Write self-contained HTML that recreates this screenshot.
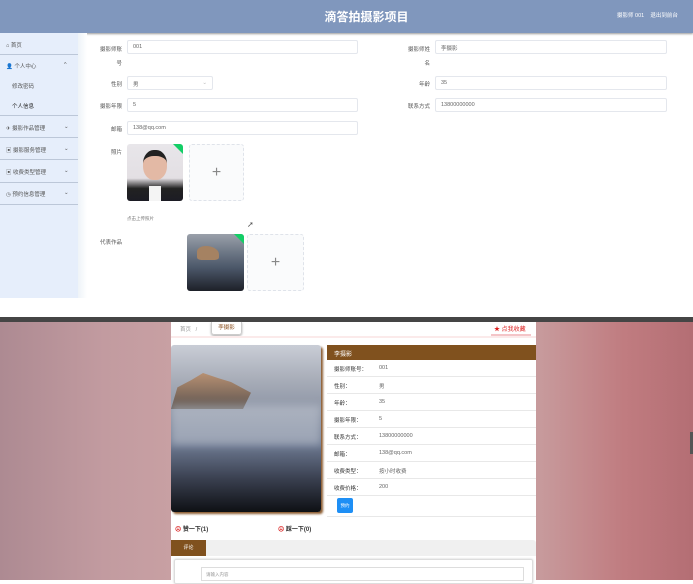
<!DOCTYPE html>
<html><head><meta charset="utf-8"><style>
*{margin:0;padding:0;box-sizing:border-box}
body{width:693px;height:580px;overflow:hidden;position:relative;background:#fff;font-family:"Liberation Sans","Noto Sans CJK SC",sans-serif;font-size:6px;color:#333}
.a{position:absolute}
.hdr{left:0;top:0;width:693px;height:33px;background:#8097bd;box-shadow:0 1px 2px #999}
.side{left:0;top:33px;width:78px;height:265px;background:#e6eefb}
.si{position:absolute;left:6px;font-size:5.5px;color:#555}
.sl{position:absolute;left:0;width:78px;height:1px;background:#bcc7d8}
.lbl{font-size:5.5px;color:#555;text-align:right}
.inp{border:1px solid #e4e7ed;border-radius:2px;height:14px;font-size:5.5px;color:#666;padding:3px 5px;background:#fff}
.up{border:1px dashed #dfe3ea;border-radius:3px;background:#fafbfc;text-align:center;color:#888;font-size:16px;font-weight:100}
.row{position:absolute;left:327px;width:209px;height:17px;border-bottom:1px solid #e8e8e8;font-size:5.5px}
.row b{position:absolute;left:7px;top:5px;font-weight:normal;color:#333}
.row i{position:absolute;left:52px;top:5px;font-style:normal;color:#666}
</style></head><body>
<div class="a hdr"></div>
<div class="a" style="left:0;width:693px;top:8px;text-align:center;color:#fff;font-size:12px;font-weight:bold;padding-left:40px">滴答拍摄影项目</div>
<div class="a" style="left:617px;top:11px;color:#fff;font-size:5.5px">摄影师 001 &nbsp;&nbsp; 退出到前台</div>
<div class="a side"></div>
<div class="a" style="left:78px;top:33px;width:9px;height:265px;background:linear-gradient(90deg,#eef3f8,#fff)"></div>
<div class="si" style="top:41px">⌂ 首页</div><div class="sl" style="top:54px"></div>
<div class="si" style="top:62px">👤 个人中心<span style="position:absolute;left:58px">^</span></div>
<div class="si" style="top:82px;left:12px">修改密码</div>
<div class="si" style="top:102px;left:12px;color:#222">个人信息</div><div class="sl" style="top:115px"></div>
<div class="si" style="top:124px">✈ 摄影作品管理<span style="position:absolute;left:58px">⌄</span></div><div class="sl" style="top:137px"></div>
<div class="si" style="top:146px">▣ 摄影服务管理<span style="position:absolute;left:58px">⌄</span></div><div class="sl" style="top:159px"></div>
<div class="si" style="top:168px">▣ 收费类型管理<span style="position:absolute;left:58px">⌄</span></div><div class="sl" style="top:182px"></div>
<div class="si" style="top:190px">◷ 预约信息管理<span style="position:absolute;left:58px">⌄</span></div><div class="sl" style="top:204px"></div>

<div class="a lbl" style="left:90px;top:43px;width:32px;line-height:14px">摄影师账<br>号</div>
<div class="a inp" style="left:127px;top:40px;width:231px">001</div>
<div class="a lbl" style="left:398px;top:43px;width:32px;line-height:14px">摄影师姓<br>名</div>
<div class="a inp" style="left:435px;top:40px;width:232px">李摄影</div>
<div class="a lbl" style="left:90px;top:80px;width:32px">性别</div>
<div class="a inp" style="left:127px;top:76px;width:86px">男<span style="float:right;color:#bbb">⌄</span></div>
<div class="a lbl" style="left:398px;top:80px;width:32px">年龄</div>
<div class="a inp" style="left:435px;top:76px;width:232px">35</div>
<div class="a lbl" style="left:90px;top:102px;width:32px">摄影年限</div>
<div class="a inp" style="left:127px;top:98px;width:231px">5</div>
<div class="a lbl" style="left:390px;top:102px;width:40px">联系方式</div>
<div class="a inp" style="left:435px;top:98px;width:232px">13800000000</div>
<div class="a lbl" style="left:90px;top:125px;width:32px">邮箱</div>
<div class="a inp" style="left:127px;top:121px;width:231px">138@qq.com</div>
<div class="a lbl" style="left:90px;top:148px;width:32px">照片</div>
<div class="a" style="left:127px;top:144px;width:56px;height:57px;border-radius:3px;overflow:hidden;background:linear-gradient(180deg,#e8e6ea 0%,#e3dfe3 60%,#222 78%,#1c1c24 100%)">
<div class="a" style="left:16px;top:6px;width:24px;height:30px;border-radius:45%;background:#e3b9a5;border-top:6px solid #222"></div>
<div class="a" style="left:22px;top:42px;width:12px;height:15px;background:#f4f4f4"></div>
<div class="a" style="right:0;top:0;width:0;height:0;border-left:10px solid transparent;border-top:10px solid #13ce66"></div></div>
<div class="a up" style="left:189px;top:144px;width:55px;height:57px;line-height:55px">+</div>
<div class="a" style="left:127px;top:216px;font-size:4.5px;color:#777">点击上传照片</div>
<div class="a" style="left:247px;top:220px;font-size:8px;color:#555">➚</div>
<div class="a lbl" style="left:90px;top:238px;width:32px">代表作品</div>
<div class="a" style="left:187px;top:234px;width:57px;height:57px;border-radius:3px;overflow:hidden;background:linear-gradient(180deg,#9aa0aa 0%,#707a88 30%,#4a5668 60%,#1d2028 100%)">
<div class="a" style="left:10px;top:12px;width:22px;height:14px;background:#a58262;border-radius:40% 60% 20% 20%"></div>
<div class="a" style="right:0;top:0;border-left:10px solid transparent;border-top:10px solid #13ce66"></div></div>
<div class="a up" style="left:247px;top:234px;width:57px;height:57px;line-height:55px">+</div>

<div class="a" style="left:0;top:298px;width:693px;height:19px;background:#fff"></div>
<div class="a" style="left:0;top:317px;width:693px;height:5px;background:#454545"></div>
<div class="a" style="left:0;top:322px;width:693px;height:258px;background:linear-gradient(90deg,#ad8a92 0%,#c29ba0 15%,#c8a0a3 25%,#c79a9c 78%,#c07c80 90%,#b46e74 100%)"></div>
<div class="a" style="left:690px;top:432px;width:3px;height:22px;background:#555"></div>
<div class="a" style="left:171px;top:322px;width:365px;height:258px;background:#fff"></div>
<div class="a" style="left:180px;top:325px;font-size:5.5px;color:#999">首页 &nbsp; /</div>
<div class="a" style="left:211px;top:322px;width:31px;height:13px;border:1px solid #ccc;border-top:none;border-radius:0 0 3px 3px;box-shadow:0 1px 2px #aaa;font-size:5.5px;color:#8a4f1e;text-align:center;line-height:12px">李摄影</div>
<div class="a" style="left:494px;top:324px;font-size:6px;color:#d22">★ 点我收藏</div>
<div class="a" style="left:491px;top:334px;width:40px;height:3px;background:#f4c5c8"></div>
<div class="a" style="left:171px;top:336px;width:365px;height:2px;background:#fbeaea"></div>
<div class="a" style="left:171px;top:345px;width:150px;height:167px;border-radius:3px;box-shadow:2px 2px 2px #8a5a2e;overflow:hidden;background:linear-gradient(180deg,#c9cdd6 0%,#a9aeb9 20%,#8b93a4 40%,#6c7890 60%,#3a4050 80%,#0e1014 100%)">
<div class="a" style="left:0;top:28px;width:80px;height:36px;background:linear-gradient(180deg,#b79072,#5d5450);clip-path:polygon(0 100%,8% 40%,25% 20%,40% 0,60% 15%,75% 25%,100% 55%,90% 100%)"></div>
<div class="a" style="left:0;top:60px;width:150px;height:40px;background:rgba(200,205,215,.5);filter:blur(4px)"></div>
</div>
<div class="a" style="left:327px;top:345px;width:209px;height:15px;background:#80511e;color:#fff;font-size:6px;padding:4px 7px">李摄影</div>
<div class="row" style="top:360px"><b>摄影师账号：</b><i>001</i></div>
<div class="row" style="top:377px"><b>性别：</b><i>男</i></div>
<div class="row" style="top:394px"><b>年龄：</b><i>35</i></div>
<div class="row" style="top:411px"><b>摄影年限：</b><i>5</i></div>
<div class="row" style="top:428px"><b>联系方式：</b><i>13800000000</i></div>
<div class="row" style="top:445px"><b>邮箱：</b><i>138@qq.com</i></div>
<div class="row" style="top:462px"><b>收费类型：</b><i>按小时收费</i></div>
<div class="row" style="top:479px"><b>收费价格：</b><i>200</i></div>
<div class="a" style="left:327px;top:516px;width:209px;height:1px;background:#e8e8e8"></div>
<div class="a" style="left:337px;top:498px;width:16px;height:15px;background:#1e8ff5;border-radius:2px;color:#fff;font-size:4.5px;text-align:center;line-height:15px">预约</div>
<div class="a" style="left:175px;top:524px;font-size:6px;font-weight:bold;color:#333"><span style="color:#d33">☹</span> 赞一下(1)</div>
<div class="a" style="left:278px;top:524px;font-size:6px;font-weight:bold;color:#333"><span style="color:#d33">☹</span> 踩一下(0)</div>
<div class="a" style="left:171px;top:540px;width:365px;height:16px;background:#f0f0f0;border-radius:3px 3px 0 0"></div>
<div class="a" style="left:171px;top:540px;width:35px;height:16px;background:#80511e;color:#fff;font-size:5px;text-align:center;line-height:16px">评论</div>
<div class="a" style="left:174px;top:559px;width:359px;height:25px;border:1px solid #ddd;border-radius:2px;box-shadow:0 0 2px #ccc"></div>
<div class="a" style="left:201px;top:567px;width:323px;height:14px;border:1px solid #ddd;font-size:4.5px;color:#999;padding:4px 4px">请输入内容</div>
</body></html>
